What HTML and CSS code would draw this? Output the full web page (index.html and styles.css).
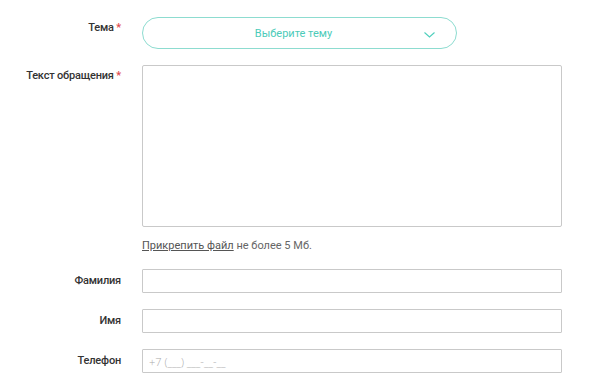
FILE: index.html
```html
<!DOCTYPE html>
<html>
	<head>
		<meta charset="UTF-8">
		<title>Обращение</title>
		<link rel="stylesheet" href="styles.css">
	</head>
	<body>
	<form class="feedback">
	    <div class="row">
	        <label class="label">Тема <span class="req">*</span></label>
	        <div class="field">
	            <div class="select">
	                <span>Выберите тему</span>
	                <svg class="chevron" width="11" height="6" viewBox="0 0 11 6"><path d="M0.5 0.5 L5.5 5 L10.5 0.5" fill="none" stroke="#4fcfbd" stroke-width="1.1"/></svg>
	            </div>
	        </div>
	    </div>
	    <div class="row">
	        <label class="label">Текст обращения <span class="req">*</span></label>
	        <div class="field">
	            <textarea class="text"></textarea>
	            <div class="attach"><a href="javascript:;">Прикрепить файл</a> не более 5 Мб.</div>
	        </div>
	    </div>
	    <div class="row mid">
	        <label class="label">Фамилия</label>
	        <div class="field"><input class="inp" type="text"></div>
	    </div>
	    <div class="row mid">
	        <label class="label">Имя</label>
	        <div class="field"><input class="inp" type="text"></div>
	    </div>
	    <div class="row mid">
	        <label class="label">Телефон</label>
	        <div class="field"><input class="inp" type="text" placeholder="+7 (___) ___-__-__"></div>
	    </div>
	</form>
	</body>
</html>
```

FILE: styles.css
```css
body{
    margin:0;
    background:#fff;
    font-family:Roboto,"Open Sans",sans-serif;
    color:#333;
}
.feedback{
    display:flex;
    flex-direction:column;
    gap:16px;
    padding-top:17px;
}
.row{
    display:grid;
    grid-template-columns:121px 420px;
    column-gap:21px;
    align-items:start;
}
.row.mid{
    align-items:center;
}
.label{
    text-align:right;
    font-size:11px;
    line-height:14px;
    font-weight:500;
    letter-spacing:-0.2px;
    padding-top:4px;
    color:#333;
}
.row.mid .label{
    padding-top:0;
}
.req{
    color:#e0474c;
}
.field{
    display:flex;
    flex-direction:column;
}
.select{
    width:315px;
    height:32px;
    box-sizing:border-box;
    border:1px solid #8ddcd0;
    border-radius:16px;
    display:flex;
    align-items:center;
    justify-content:center;
    padding-right:12px;
    position:relative;
    font-size:11px;
    color:#4ccbb9;
}
.chevron{
    position:absolute;
    right:21px;
    top:14px;
}
.text{
    height:162px;
    box-sizing:border-box;
    border:1px solid #c9c9c9;
    border-radius:2px;
    resize:none;
    margin:0;
}
.attach{
    margin-top:12px;
    font-size:11px;
    line-height:14px;
    color:#666;
}
.attach a{
    color:#555;
    text-decoration:underline;
}
.inp{
    height:24px;
    box-sizing:border-box;
    border:1px solid #c9c9c9;
    border-radius:1px;
    margin:0;
    padding:0 6px;
    font-family:"Open Sans",sans-serif;
    font-size:11px;
}
.inp::placeholder{
    color:#aaa;
    font-weight:300;
}
```
